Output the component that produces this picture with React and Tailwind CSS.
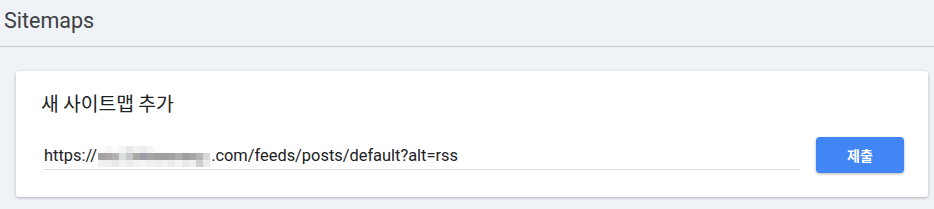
import React from 'react';

const topRow = ['bg-[#fbfbfb]', 'bg-[#f6f6f6]', 'bg-[#fcfcfc]', 'bg-[#f7f4f2]', 'bg-[#e8eaec]', 'bg-[#f2f2f2]', 'bg-[#eeeeee]', 'bg-[#f5f5f5]', 'bg-[#fdfdfd]', 'bg-white', 'bg-white', 'bg-white', 'bg-white', 'bg-white', 'bg-white', 'bg-white'];
const midRow = ['bg-[#a4a1a1]', 'bg-[#aaa7a6]', 'bg-[#b3b3b0]', 'bg-[#d9dee1]', 'bg-[#c7c7c9]', 'bg-[#a9a9a8]', 'bg-[#9d9ca9]', 'bg-[#a7a5a6]', 'bg-[#a2a1a1]', 'bg-[#9f9e9e]', 'bg-[#a4a3a3]', 'bg-[#adadad]', 'bg-[#a0a0a0]', 'bg-[#a6a6a6]', 'bg-[#b5b5b5]', 'bg-[#d7d7d7]'];
const botRow = ['bg-[#f1f1f1]', 'bg-[#eeeeee]', 'bg-[#e7e7e7]', 'bg-[#f2f2f2]', 'bg-[#ebebeb]', 'bg-[#f3f3f3]', 'bg-[#f5f5f5]', 'bg-[#f0f0f0]', 'bg-[#eeeeee]', 'bg-[#f2f2f2]', 'bg-[#ececec]', 'bg-[#f4f4f4]', 'bg-[#e9e9e9]', 'bg-[#f0f0f0]', 'bg-[#cfcfcf]', 'bg-[#ececec]'];

const Mosaic = () => (
  <span className="inline-flex flex-col w-[112px] mx-[1px]">
    {[topRow, midRow, botRow].map((row, i) => (
      <span key={i} className="flex h-[7px]">
        {row.map((c, j) => (
          <span key={j} className={`w-[7px] h-full ${c}`} />
        ))}
      </span>
    ))}
  </span>
);

export default function App() {
  return (
    <div className="w-[934px] h-[209px] bg-[#eff2f7] overflow-hidden" style={{ fontFamily: 'Roboto, "Noto Sans CJK KR", sans-serif' }}>
      {/* Header */}
      <div className="h-[47px] border-b border-[#c8c9cc] flex items-center pl-[4px] pb-[4px]">
        <h1 className="text-[21.5px] text-[#3c4043]">Sitemaps</h1>
      </div>

      {/* Add sitemap card */}
      <div className="ml-4 mr-[6px] mt-[24px] h-[126px] bg-white rounded-[3px] shadow-[0_1px_3px_rgba(60,64,67,0.35)] pl-[25px] pr-[24px] pt-[19px]">
        <h2 className="text-[19.3px] leading-[26px] text-[#202124]" style={{ fontFamily: '"Noto Sans CJK KR", Roboto, sans-serif', fontWeight: 400 }}>
          새 사이트맵 추가
        </h2>
        <div className="flex items-start mt-[20px]">
          <div className="w-[756px] shrink-0 ml-[3px] border-b border-[#dadce0] h-[34px] flex items-end pb-[1px]">
            <span className="text-[16.4px] leading-[24px] text-[#202124] whitespace-nowrap flex items-center">
              https://<Mosaic />.com/feeds/posts/default?alt=rss
            </span>
          </div>
          <button className="ml-[16px] mt-[1px] w-[88px] h-[36px] shrink-0 rounded-[4px] bg-[#4285f4] text-white text-[14px] font-bold shadow-[0_1px_3px_rgba(0,0,0,0.3)]" style={{ fontFamily: '"Noto Sans CJK KR", sans-serif' }}>
            제출
          </button>
        </div>
      </div>
    </div>
  );
}
